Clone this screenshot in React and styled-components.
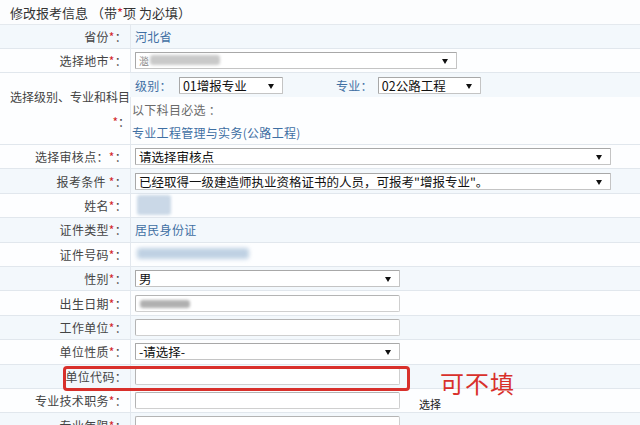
import React from "react";
import styled, { createGlobalStyle } from "styled-components";

const Global = createGlobalStyle`
  html, body { margin: 0; padding: 0; background: #ffffff; }
  body { font-family: "Noto Sans CJK SC", "Liberation Sans", sans-serif; font-size: 12px; color: #444; }
  * { box-sizing: border-box; }
`;

const Page = styled.div`
  width: 640px;
  height: 425px;
  overflow: hidden;
  background: #fcfdfe;
`;

const Title = styled.div`
  height: 25px;
  display: flex;
  align-items: center;
  padding-left: 10px;
  font-size: 13px;
  color: #333;
  border-bottom: 1px solid #e4e9ee;
  white-space: pre;
`;

const Row = styled.div`
  position: relative;
  z-index: ${(p) => (p.$top ? 2 : 0)};
  display: flex;
  height: ${(p) => p.$h || 24.4}px;
  background: ${(p) => (p.$alt ? "#f3f8fc" : "#fdfeff")};
  border-bottom: 1px solid #e1e7ed;
`;

const Label = styled.div`
  flex: 0 0 131px;
  display: flex;
  flex-direction: column;
  align-items: flex-end;
  justify-content: center;
  padding-right: ${(p) => (p.$tight ? 0 : 3)}px;
  border-right: 1px solid #e3e8ee;
  color: #444;
  white-space: nowrap;
  line-height: 25px;
  letter-spacing: ${(p) => (p.$tight ? 0 : 0.3)}px;
`;

const Star = styled.span`
  color: #d2252a;
`;

const Cell = styled.div`
  flex: 1;
  display: flex;
  align-items: center;
  padding-left: ${(p) => (p.$pad != null ? p.$pad : 4)}px;
  min-width: 0;
`;

const Stack = styled.div`
  flex: 1;
  display: flex;
  flex-direction: column;
  margin-left: -1px;
`;

const Line = styled.div`
  height: ${(p) => p.$h || 24}px;
  display: flex;
  align-items: center;
  padding-left: ${(p) => p.$pad || 0}px;
  background: ${(p) => p.$bg || "transparent"};
`;

const Blue = styled.span`
  color: #3f6fa3;
  margin-right: ${(p) => p.$mr || 0}px;
  letter-spacing: 0.3px;
`;

const Gray = styled.span`
  color: #6a6a6a;
  letter-spacing: 0.3px;
`;

const SelectBox = styled.div`
  position: relative;
  width: ${(p) => p.$w}px;
  height: 17px;
  background: #fff;
  border: 1px solid #a8a8a8;
  border-right-color: #c4c4c4;
  border-bottom-color: #c4c4c4;
  border-radius: 1px;
  display: flex;
  align-items: center;
  padding-left: 3px;
  font-size: 12.5px;
  color: #111;
  white-space: nowrap;
  overflow: hidden;
  margin-right: ${(p) => p.$mr || 0}px;
`;

const Arrow = styled.svg`
  position: absolute;
  right: 8px;
  top: 6px;
`;

const InputBox = styled.div`
  position: relative;
  width: 265px;
  height: 17px;
  background: #fff;
  border: 1px solid #b4b4b4;
  border-right-color: #cfcfcf;
  border-bottom-color: #cfcfcf;
  border-radius: 2px;
`;

const Blur = styled.div`
  position: absolute;
  left: ${(p) => p.$x}px;
  top: ${(p) => p.$y}px;
  width: ${(p) => p.$w}px;
  height: ${(p) => p.$h}px;
  background: ${(p) => p.$c};
  filter: blur(${(p) => p.$b || 2}px);
  border-radius: 3px;
`;

const BlurWrap = styled.div`
  position: relative;
  width: 130px;
  height: 22px;
`;

const Small = styled.span`
  margin-left: 19px;
  font-size: 11px;
  color: #222;
  margin-top: 6px;
`;

const Highlight = styled.div`
  position: absolute;
  left: 63px;
  top: 1px;
  width: 347px;
  height: 25px;
  border: 3px solid #d8302b;
  border-radius: 4px;
  pointer-events: none;
`;

const Note = styled.div`
  position: absolute;
  left: 440px;
  top: 4px;
  font-size: 24px;
  line-height: 28px;
  color: #d8302b;
  letter-spacing: 1px;
  white-space: nowrap;
`;

const Sel = ({ w, mr, children }) => (
  <SelectBox $w={w} $mr={mr}>
    {children}
    <Arrow width="6" height="5" viewBox="0 0 6 5">
      <path d="M0 0 L6 0 L3 5 Z" fill="#111" />
    </Arrow>
  </SelectBox>
);

const Lbl = ({ text, star = true, pre = "" }) => (
  <Label>
    <span>
      {text}
      {pre}
      {star && <Star>*</Star>}：
    </span>
  </Label>
);

export default function App() {
  return (
    <Page>
      <Global />
      <Title>
        修改报考信息 （带<Star>*</Star>项 为必填）
      </Title>

      <Row $h={24} $alt>
        <Lbl text="省份" />
        <Cell>
          <Blue>河北省</Blue>
        </Cell>
      </Row>

      <Row $h={24}>
        <Lbl text="选择地市" />
        <Cell>
          <Sel w={322}>
            <span style={{ color: "#888", fontSize: 10 }}>㴴</span>
            <Blur $x={14} $y={2} $w={70} $h={10} $c="#c9c9c9" $b={1.5} />
          </Sel>
        </Cell>
      </Row>

      <Row $h={72}>
        <Label $tight>
          <span>选择级别、专业和科目</span>
          <span>
            <Star>*</Star>：
          </span>
        </Label>
        <Stack>
          <Line $h={24} $pad={5} $bg="#f3f8fc">
            <Blue $mr={7}>级别：</Blue>
            <Sel w={104} mr={53}>01增报专业</Sel>
            <Blue $mr={5}>专业：</Blue>
            <Sel w={103}>02公路工程</Sel>
          </Line>
          <Line $h={24} $pad={2}>
            <Gray>以下科目必选 ：</Gray>
          </Line>
          <Line $h={23} $pad={2}>
            <Blue>专业工程管理与实务(公路工程)</Blue>
          </Line>
        </Stack>
      </Row>

      <Row>
        <Label>
          <span>
            选择审核点：<Star>*</Star>：
          </span>
        </Label>
        <Cell>
          <Sel w={476}>请选择审核点</Sel>
        </Cell>
      </Row>

      <Row $alt>
        <Lbl text="报考条件" pre=" " />
        <Cell>
          <Sel w={476}>已经取得一级建造师执业资格证书的人员，可报考"增报专业"。</Sel>
        </Cell>
      </Row>

      <Row>
        <Lbl text="姓名" />
        <Cell $pad={2}>
          <BlurWrap>
            <Blur $x={4} $y={1} $w={34} $h={20} $c="#cad8e7" $b={1.5} />
          </BlurWrap>
        </Cell>
      </Row>

      <Row $alt>
        <Lbl text="证件类型" />
        <Cell>
          <Blue>居民身份证</Blue>
        </Cell>
      </Row>

      <Row>
        <Lbl text="证件号码" />
        <Cell $pad={2}>
          <BlurWrap>
            <Blur $x={4} $y={5} $w={112} $h={11} $c="#bfd1e3" $b={2} />
          </BlurWrap>
        </Cell>
      </Row>

      <Row $alt>
        <Lbl text="性别" />
        <Cell>
          <Sel w={265}>男</Sel>
        </Cell>
      </Row>

      <Row>
        <Lbl text="出生日期" />
        <Cell>
          <InputBox>
            <Blur $x={4} $y={4} $w={50} $h={8} $c="#b0b0b0" $b={1.5} />
          </InputBox>
        </Cell>
      </Row>

      <Row $alt>
        <Lbl text="工作单位" />
        <Cell>
          <InputBox />
        </Cell>
      </Row>

      <Row>
        <Lbl text="单位性质" />
        <Cell>
          <Sel w={265}>-请选择-</Sel>
        </Cell>
      </Row>

      <Row $alt $top>
        <Lbl text="单位代码" star={false} />
        <Cell>
          <InputBox />
        </Cell>
        <Highlight />
        <Note>可不填</Note>
      </Row>

      <Row>
        <Lbl text="专业技术职务" />
        <Cell>
          <InputBox />
          <Small>选择</Small>
        </Cell>
      </Row>

      <Row $alt>
        <Lbl text="专业年限" />
        <Cell>
          <InputBox />
        </Cell>
      </Row>
    </Page>
  );
}
